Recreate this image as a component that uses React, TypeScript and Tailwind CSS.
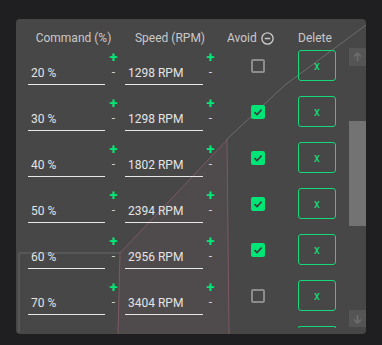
import React from 'react';

interface Row {
  command: number;
  speed: number;
  avoid: boolean;
}

const rows: Row[] = [
  { command: 20, speed: 1298, avoid: false },
  { command: 30, speed: 1298, avoid: true },
  { command: 40, speed: 1802, avoid: true },
  { command: 50, speed: 2394, avoid: true },
  { command: 60, speed: 2956, avoid: true },
  { command: 70, speed: 3404, avoid: false },
];

const Stepper: React.FC<{ className?: string }> = ({ className = '' }) => (
  <div className={`flex flex-col items-center ${className}`}>
    <span className="h-[18px] text-[15px] leading-[18px] font-bold text-[#00e676]">+</span>
    <span className="mt-[-2px] h-[16px] text-[12px] leading-[16px] text-[#d6d6d6]">-</span>
  </div>
);

const Checkbox: React.FC<{ checked: boolean }> = ({ checked }) =>
  checked ? (
    <div className="flex h-[14px] w-[14px] items-center justify-center rounded-[2px] bg-[#00e676]">
      <svg width="10" height="10" viewBox="0 0 10 10">
        <path d="M1.5 5.2 L4 7.6 L8.6 2.6" fill="none" stroke="#3d3d3d" strokeWidth="1.6" />
      </svg>
    </div>
  ) : (
    <div className="h-[14px] w-[14px] rounded-[2px] border-2 border-[#8c8c8c]" />
  );

const Chart: React.FC = () => (
  <svg className="absolute inset-0" width="350" height="315" viewBox="0 0 350 315">
    <polygon points="104,234 211,121 213,315 102,315" fill="rgba(190,120,130,0.07)" />
    <polyline points="350,6 269,66 210,121" fill="none" stroke="#6e6e6e" strokeWidth="1" />
    <polyline points="3,313 3,234 104,234" fill="none" stroke="#686868" strokeWidth="1" />
    <polyline points="102,315 104,234 211,121 213,315" fill="none" stroke="#7c5a63" strokeWidth="1" />
  </svg>
);

export default function App() {
  return (
    <div className="h-[345px] w-[382px] bg-[#1f1f21] pl-[16px] pt-[19px]" style={{ fontFamily: 'Roboto, "Liberation Sans", sans-serif' }}>
      <div className="relative h-[315px] w-[350px] overflow-hidden rounded-[4px] bg-[#474747]">
        <Chart />
        <div className="relative">
          {/* Header */}
          <div className="flex h-[29px] items-start pl-[12px] pt-[11px] text-[12px] leading-[16px] text-[#c9c9c9]">
            <div className="w-[91px] text-center">Command (%)</div>
            <div className="ml-[6px] w-[90px] text-center">Speed (RPM)</div>
            <div className="ml-[12px] flex w-[50px] items-center gap-[4px]">
              <span>Avoid</span>
              <svg width="13" height="13" viewBox="0 0 13 13">
                <circle cx="6.5" cy="6.5" r="5.6" fill="none" stroke="#c9c9c9" strokeWidth="1.4" />
                <line x1="3.8" y1="6.5" x2="9.2" y2="6.5" stroke="#c9c9c9" strokeWidth="1.4" />
              </svg>
            </div>
            <div className="ml-[21px]">Delete</div>
          </div>

          {/* Scroll area */}
          <div className="flex h-[280px]">
            <div className="flex-1 overflow-hidden pl-[12px]">
              {rows.map(row => (
                <div key={row.command} className="flex h-[46px] items-start">
                  <div className="mt-[16px] h-[21px] w-[77px] border-b border-[#e8e8e8] pl-[3px] text-[12px] leading-[18px] text-[#e4e4e4]">
                    {row.command} %
                  </div>
                  <Stepper className="w-[17px]" />
                  <div className="ml-[3px] mt-[16px] h-[21px] w-[78px] border-b border-[#e8e8e8] pl-[3px] text-[12px] leading-[18px] text-[#e4e4e4]">
                    {row.speed} RPM
                  </div>
                  <Stepper className="w-[15px]" />
                  <div className="mt-[11px] flex w-[80px] justify-center">
                    <Checkbox checked={row.avoid} />
                  </div>
                  <button className="mt-[2px] flex h-[31px] w-[38px] items-center justify-center rounded-[3px] border border-[#14d87a] text-[12px] text-[#14e07c]">
                    x
                  </button>
                </div>
              ))}
              {/* next row, scrolled out of view */}
              <div className="flex h-[4px] items-start">
                <div className="ml-[270px] mt-[2px] h-[2px] w-[38px] rounded-t-[3px] border-x border-t border-[#14d87a]" />
              </div>
            </div>
            {/* Scrollbar */}
            <div className="flex w-[17px] flex-col">
              <div className="flex h-[18px] items-center justify-center bg-[#555555]">
                <svg width="9" height="10" viewBox="0 0 9 10">
                  <path d="M4.5 1 L4.5 9 M1 4.5 L4.5 1 L8 4.5" fill="none" stroke="#6e6e6e" strokeWidth="1.6" />
                </svg>
              </div>
              <div className="flex-1">
                <div className="mt-[55px] h-[105px] bg-[#737373]" />
              </div>
              <div className="mb-[1px] flex h-[17px] items-center justify-center bg-[#555555]">
                <svg width="9" height="10" viewBox="0 0 9 10">
                  <path d="M4.5 9 L4.5 1 M1 5.5 L4.5 9 L8 5.5" fill="none" stroke="#6e6e6e" strokeWidth="1.6" />
                </svg>
              </div>
            </div>
          </div>
        </div>
      </div>
    </div>
  );
}
